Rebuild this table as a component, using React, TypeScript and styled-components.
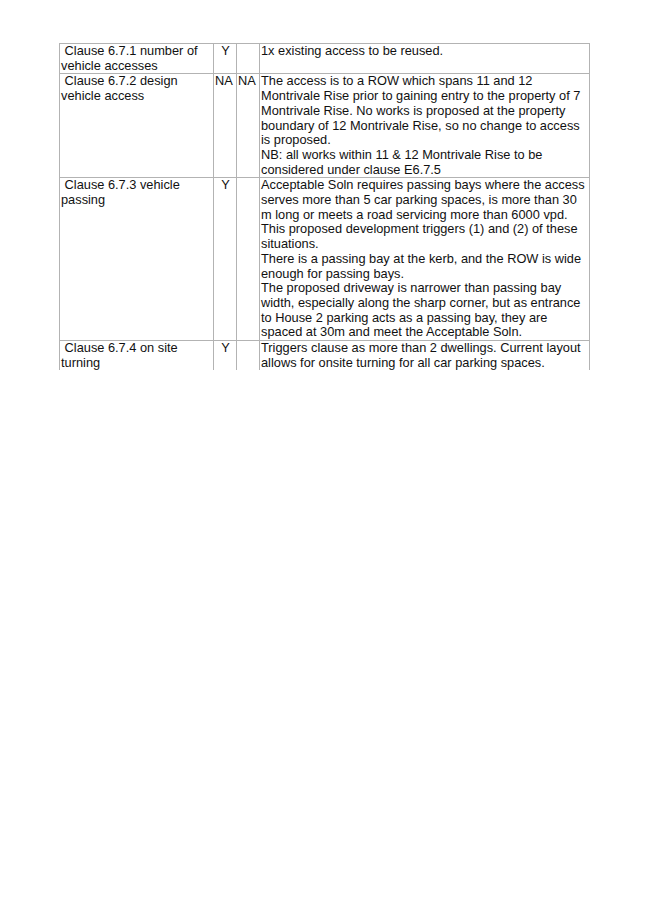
import styled, { createGlobalStyle } from 'styled-components';

const GlobalStyle = createGlobalStyle`
  html, body {
    margin: 0;
    padding: 0;
    background: #ffffff;
  }
`;

const Page = styled.div`
  width: 646px;
  min-height: 915px;
  box-sizing: border-box;
  padding: 43px 0 0 59px;
  background: #ffffff;
`;

const Table = styled.table`
  border-collapse: collapse;
  table-layout: fixed;
  width: 530px;
  font-family: 'Liberation Sans', Arial, sans-serif;
  font-size: 12.8px;
  line-height: 14.7px;
  color: #111111;
`;

const Col = styled.col<{ $w: number }>`
  width: ${(p) => p.$w}px;
`;

const Cell = styled.td<{ $align?: 'left' | 'center'; $open?: boolean }>`
  border: 1px solid #b3b3b3;
  border-bottom: ${(p) => (p.$open ? 'none' : '1px solid #b3b3b3')};
  padding: 0 0 0 1px;
  vertical-align: top;
  text-align: ${(p) => p.$align || 'left'};
  white-space: pre-wrap;
`;

const Para = styled.div`
  margin: 0;
`;

type Row = {
  clause: string;
  a: string;
  b: string;
  lines: string[];
};

const rows: Row[] = [
  {
    clause: ' Clause 6.7.1 number of vehicle accesses',
    a: 'Y',
    b: '',
    lines: ['1x existing access to be reused.'],
  },
  {
    clause: ' Clause 6.7.2 design vehicle access',
    a: 'NA',
    b: 'NA',
    lines: [
      'The access is to a ROW which spans 11 and 12 Montrivale Rise prior to gaining entry to the property of 7 Montrivale Rise. No works is proposed at the property boundary of 12 Montrivale Rise, so no change to access is proposed.',
      'NB: all works within 11 & 12 Montrivale Rise to be considered under clause E6.7.5',
    ],
  },
  {
    clause: ' Clause 6.7.3 vehicle passing',
    a: 'Y',
    b: '',
    lines: [
      'Acceptable Soln requires passing bays where the access serves more than 5 car parking spaces, is more than 30 m long or meets a road servicing more than 6000 vpd.',
      'This proposed development triggers (1) and (2) of these situations.',
      'There is a passing bay at the kerb, and the ROW is wide enough for passing bays.',
      'The proposed driveway is narrower than passing bay width, especially along the sharp corner, but as entrance to House 2 parking acts as a passing bay, they are spaced at 30m and meet the Acceptable Soln.',
    ],
  },
  {
    clause: ' Clause 6.7.4 on site turning',
    a: 'Y',
    b: '',
    lines: [
      'Triggers clause as more than 2 dwellings. Current layout allows for onsite turning for all car parking spaces.',
    ],
  },
];

function App() {
  return (
    <Page>
      <GlobalStyle />
      <Table>
        <colgroup>
          <Col $w={154} />
          <Col $w={23} />
          <Col $w={23} />
          <Col $w={330} />
        </colgroup>
        <tbody>
          {rows.map((row, i) => {
            const open = i === rows.length - 1;
            return (
              <tr key={row.clause}>
                <Cell $open={open}>{row.clause}</Cell>
                <Cell $open={open} $align={row.a === 'Y' ? 'center' : 'left'}>
                  {row.a}
                </Cell>
                <Cell $open={open} $align={row.b === 'Y' ? 'center' : 'left'}>
                  {row.b}
                </Cell>
                <Cell $open={open}>
                  {row.lines.map((line) => (
                    <Para key={line}>{line}</Para>
                  ))}
                </Cell>
              </tr>
            );
          })}
        </tbody>
      </Table>
    </Page>
  );
}

export default App;
